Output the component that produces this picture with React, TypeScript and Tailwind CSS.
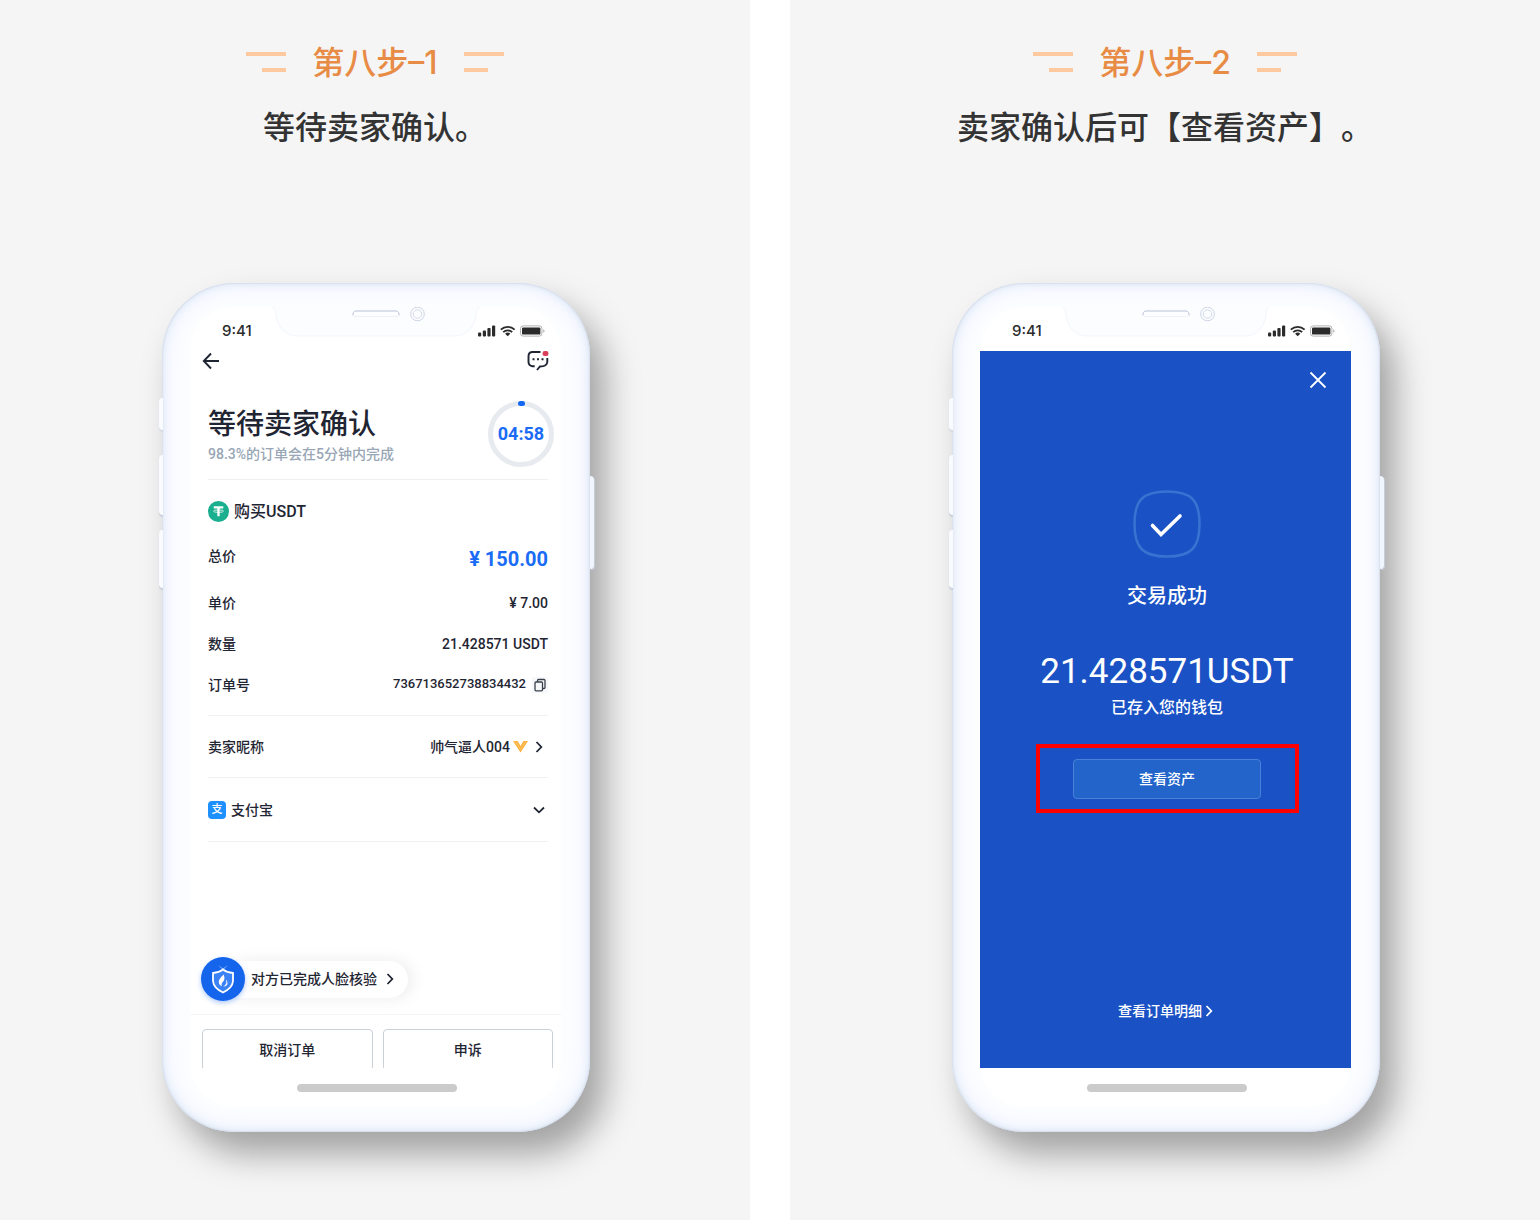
import type { ReactNode } from "react";

function StepHeading({ title, caption }: { title: string; caption: string }) {
  return (
    <header className="flex flex-col items-center">
      <div className="flex items-center justify-center gap-6">
        <span aria-hidden="true" className="flex flex-col items-end gap-3">
          <span className="h-1 w-10 bg-[#ffc9a0]" />
          <span className="h-1 w-6 bg-[#ffc9a0]" />
        </span>
        <h2 className="px-0.5 pt-0.5 font-[Inter,'Noto_Sans_CJK_SC',sans-serif] text-[32px] leading-[46px] font-medium text-[#e88b45]">
          {title}
        </h2>
        <span aria-hidden="true" className="flex flex-col items-start gap-3">
          <span className="h-1 w-10 bg-[#ffc9a0]" />
          <span className="h-1 w-6 bg-[#ffc9a0]" />
        </span>
      </div>
      <p className="mt-[18px] text-[32px] leading-[48px] font-medium whitespace-nowrap text-[#333333] [text-spacing-trim:space-all]">
        {caption}
      </p>
    </header>
  );
}

function StatusBar() {
  return (
    <div className="relative flex h-11 items-center justify-between pt-1 pr-4 pl-8">
      <Notch />
      <span className="font-[Inter,sans-serif] text-[15px] leading-5 font-medium text-[#2b2b2b]">9:41</span>
      <svg viewBox="0 0 67 14" className="h-3.5 w-[67px]" aria-hidden="true">
        <g fill="#2b2b2b">
          <rect x="0" y="8.5" width="3.2" height="4" rx="1" />
          <rect x="4.8" y="6.5" width="3.2" height="6" rx="1" />
          <rect x="9.4" y="4" width="3.2" height="8.5" rx="1" />
          <rect x="14" y="1.5" width="3.2" height="11" rx="1" />
          <path d="M29.7 12.2l-2.6-2.5a3.9 3.9 0 0 1 5.2 0z" />
        </g>
        <g fill="none" stroke="#2b2b2b" strokeWidth="1.8">
          <path d="M22.8 5.6a10 10 0 0 1 13.8 0" />
          <path d="M25.2 8.2a6.5 6.5 0 0 1 9 0" />
        </g>
        <rect x="42.5" y="1.9" width="21.4" height="10.2" rx="2.6" fill="none" stroke="#b3b3b3" />
        <rect x="44" y="3.4" width="18.4" height="7.2" rx="1.2" fill="#2b2b2b" />
        <path d="M65.2 5.2q1.4.6 1.4 1.8t-1.4 1.8z" fill="#b3b3b3" />
      </svg>
    </div>
  );
}

function Notch() {
  return (
    <svg
      viewBox="0 0 208 30"
      fill="none"
      className="absolute top-0 left-1/2 h-[30px] w-[208px] -translate-x-1/2"
      aria-hidden="true"
    >
      <path
        d="M0 0c3 1 4 3 4 7 1 13 9 22 22 22h156c13 0 21-9 22-22 0-4 1-6 4-7z"
        fill="#fcfdff"
      />
      <path d="M0 0c3 1 4 3 4 7 1 13 9 22 22 22h156c13 0 21-9 22-22 0-4 1-6 4-7" stroke="#f2f5fb" />
      <path d="M81 8.500a3.500 3.500 0 0 1 3-4.500h40a3.500 3.500 0 0 1 3 4.500" stroke="#b9c3d6" />
      <path d="M82 9.500h44" stroke="#eef2f9" />
      <circle cx="145.500" cy="7" r="6.800" stroke="#ccd5e4" />
      <circle cx="145.500" cy="7" r="4.200" stroke="#d3dbe8" />
    </svg>
  );
}

function Phone({ children }: { children: ReactNode }) {
  return (
    <div className="relative mx-auto w-full max-w-[428px]">
      <span aria-hidden="true" className="absolute top-[115px] -left-[3px] h-8 w-1 rounded-l-sm bg-[#f9fbff] shadow-[0_2px_1px_#d5dae4]" />
      <span aria-hidden="true" className="absolute top-[172px] -left-[3px] h-[60px] w-1 rounded-l-sm bg-[#f9fbff] shadow-[0_2px_1px_#c9cfdb]" />
      <span aria-hidden="true" className="absolute top-[247px] -left-[3px] h-[58px] w-1 rounded-l-sm bg-[#f9fbff] shadow-[0_2px_1px_#c9cfdb]" />
      <div className="rounded-[72px] bg-[#fcfdff] pt-6 pr-[29px] pb-[25px] pl-7 shadow-[inset_0_0_2px_#bcc7d8,inset_0_0_8px_#d9e2f2,inset_0_0_26px_#e6eefc,15px_22px_34px_rgba(0,0,0,0.34)]">
        <div className="rounded-[44px] bg-white">
          <StatusBar />
          {children}
          <div className="flex h-[39px] items-center justify-center">
            <span className="ml-0.5 h-2 w-40 rounded-full bg-[#cbcbcb]" />
          </div>
        </div>
      </div>
      <span aria-hidden="true" className="absolute top-[193px] -right-1 h-[93px] w-1 rounded-r-sm bg-[#f1f5fe] shadow-[1px_1px_1px_#c9cfdb]" />
    </div>
  );
}

function Chevron({ className, down = false }: { className: string; down?: boolean }) {
  return (
    <svg viewBox="0 0 14 14" fill="none" stroke="currentColor" strokeWidth="1.8" className={className} aria-hidden="true">
      <path d={down ? "M2 4.500l5 4.800 5-4.800" : "M4.500 2l4.800 5-4.800 5"} />
    </svg>
  );
}

function Row({ label, children }: { label: string; children: ReactNode }) {
  return (
    <div className="flex h-[41px] items-center justify-between">
      <dt>{label}</dt>
      <dd className="flex items-center">{children}</dd>
    </div>
  );
}

function WaitingScreen() {
  return (
    <div className="text-sm font-medium text-[#1f2533]">
      <div className="flex h-5 items-center justify-between px-3">
        <button type="button" aria-label="返回">
          <svg viewBox="0 0 18 18" fill="none" stroke="#1f2533" strokeWidth="1.9" className="size-[18px]">
            <path d="M17 9H2M9 1.500L1.800 9 9 16.500" />
          </svg>
        </button>
        <button type="button" aria-label="消息">
          <svg viewBox="0 0 22 22" fill="none" className="size-[22px]">
            <path
              d="M13.500 2H5.500Q1.700 2 1.500 6v6q.1 3.700 4 4.200h2.200M10 20l3-3.500q7 0 7.300-4.500V8"
              stroke="#1f2533"
              strokeWidth="1.900"
            />
            <path d="M5.500 9.200h2M10 9.200h2M14.500 9.200h2" stroke="#1f2533" strokeWidth="2" />
            <rect x="15.500" y="1" width="6" height="5" rx="2.300" fill="#d93f57" />
          </svg>
        </button>
      </div>

      <div className="mr-[13px] ml-[18px]">
        <section className="flex h-[109px] items-end justify-between border-b border-[#eef1f3] pb-3">
          <div className="pb-0.5">
            <h3 className="text-[28px] leading-9">等待卖家确认</h3>
            <p className="leading-[22px] text-[#98a6b5]">98.3%的订单会在5分钟内完成</p>
          </div>
          <div className="relative -mr-1.5 flex size-[66px] items-center justify-center">
            <svg viewBox="0 0 66 66" fill="none" className="absolute inset-0" aria-hidden="true">
              <circle cx="33" cy="33" r="30.500" stroke="#e7eaef" strokeWidth="5" />
              <rect x="30" y="0" width="7" height="5" rx="2.500" fill="#1467f2" />
            </svg>
            <span className="relative text-lg leading-6 font-bold text-[#1a6cf5]">04:58</span>
          </div>
        </section>

        <section className="border-b border-[#eef1f3] pb-2.5">
          <h4 className="flex h-[62px] items-center gap-[5px] text-base">
            <svg viewBox="0 0 22 22" className="size-[21px]" aria-hidden="true">
              <circle cx="11" cy="11" r="11" fill="#1aaf8e" />
              <path d="M6 5.500h10v2.300h-3.800v8.200H9.800V7.800H6z" fill="#fff" />
              <ellipse cx="11" cy="10.600" rx="5.200" ry="1.300" fill="none" stroke="#fff" strokeWidth=".8" />
            </svg>
            <span className="pt-0.5">购买USDT</span>
          </h4>
          <dl>
            <div className="mb-2 flex h-8 items-center justify-between">
              <dt className="pb-1">总价</dt>
              <dd className="pt-0.5 text-xl font-bold text-[#1a6cf5]">¥ 150.00</dd>
            </div>
            <Row label="单价">¥ 7.00</Row>
            <Row label="数量">21.428571 USDT</Row>
            <Row label="订单号">
              <span className="text-[13px]">736713652738834432</span>
              <button type="button" aria-label="复制订单号" className="ml-1.5 bg-[#f7f8fa] p-px">
                <svg viewBox="0 0 14 14" fill="none" stroke="#3a404c" strokeWidth="1.300" className="size-3.5">
                  <rect x="2" y="4" width="7.500" height="8.800" rx="1" />
                  <path d="M4.500 3.800V2.500q0-1 1-1H11q1 0 1 1V9.500q0 1-1 1H9.800" />
                </svg>
              </button>
            </Row>
          </dl>
        </section>

        <button
          type="button"
          className="flex h-[62px] w-full items-center justify-between border-b border-[#eef1f3] pr-0.5"
        >
          <span>卖家昵称</span>
          <span className="flex items-center">
            帅气逼人004
            <svg viewBox="0 0 15 13" className="ml-[3px] h-[13px] w-[15px]" aria-hidden="true">
              <path d="M0 1h4.600l2.900 5 2.900-5H15L7.500 12.500z" fill="#fbb03b" />
              <path d="M2.300 1.500l5.200 8 5.200-8" stroke="#ffd58c" strokeWidth=".6" fill="none" />
            </svg>
            <Chevron className="ml-1 size-3.5" />
          </span>
        </button>

        <button
          type="button"
          className="flex h-16 w-full items-center justify-between border-b border-[#eef1f3] pr-0.5"
        >
          <span className="flex items-center gap-[5px]">
            <span className="flex size-[18px] items-center justify-center rounded bg-[#1e90ff] text-[11px] leading-none text-white">
              支
            </span>
            支付宝
          </span>
          <Chevron down className="size-3.5" />
        </button>
      </div>

      <button type="button" className="mt-[115px] ml-[11px] flex items-center">
        <span className="relative z-10 flex size-11 items-center justify-center rounded-full bg-[#1564ec] shadow-[0_2px_5px_rgba(21,100,236,0.35)]">
          <svg viewBox="0 0 26 30" fill="none" className="h-[30px] w-[26px]" aria-hidden="true">
            <path d="M8 1l5 3.500L18 1l-5 5z" fill="#8db9ff" />
            <path
              d="M13 5.500q4 3.200 10 3.500v8q-.5 7-10 11.500Q3.500 24 3 17V9q6-.3 10-3.500z"
              fill="#3b82f5"
              stroke="#fff"
              strokeWidth="1.800"
            />
            <path d="M13.800 10.500q-5.300 4.500-5 7.500 0 3 3 4-1-2.500 2.200-5.500 1-2.500-.2-6z" fill="#fff" />
            <path d="M15.800 15.500q2 4.500-2.600 7 4.500-.3 4.300-3.800 0-1.800-1.700-3.200z" fill="#fff" />
          </svg>
        </span>
        <span className="-ml-3 flex h-[37px] items-center gap-1.5 rounded-r-full bg-white pr-[11px] pl-[18px] shadow-[4px_0_16px_rgba(0,0,0,0.08)]">
          对方已完成人脸核验
          <Chevron className="size-3.5" />
        </span>
      </button>

      <footer className="mt-[13px] grid h-[54px] grid-cols-2 gap-2.5 overflow-hidden border-t border-[#f3f5f7] pt-3.5 pr-2 pl-3">
        <button type="button" className="h-[42px] rounded border border-[#c9d0d8]">
          取消订单
        </button>
        <button type="button" className="h-[42px] rounded border border-[#c9d0d8]">
          申诉
        </button>
      </footer>
    </div>
  );
}

function SuccessScreen() {
  return (
    <div className="flex flex-col items-center bg-[#1a52c5] pl-[3px] text-white">
      <button type="button" aria-label="关闭" className="mt-5 mr-6 self-end">
        <svg viewBox="0 0 18 18" fill="none" stroke="#fff" strokeWidth="1.800" className="size-[18px]">
          <path d="M1.500 1.500l15 15M16.500 1.500l-15 15" />
        </svg>
      </button>
      <svg viewBox="0 0 68 68" fill="none" className="mt-[101px] size-[68px]" aria-hidden="true">
        <path
          d="M34 1.500C58 1.500 66.500 10 66.500 34S58 66.500 34 66.500 1.500 58 1.500 34 10 1.500 34 1.500z"
          stroke="#3a72d2"
          strokeWidth="2.500"
        />
        <path d="M19.500 35.500L28 44.500 47 26" stroke="#fff" strokeWidth="3.600" strokeLinecap="round" />
      </svg>
      <h3 className="mt-[22px] text-xl leading-8 font-medium">交易成功</h3>
      <p className="mt-9 text-[35px] leading-[48px]">21.428571USDT</p>
      <p className="text-base leading-6 font-medium">已存入您的钱包</p>
      <div className="mt-6 flex h-[69px] w-[263px] items-center justify-center border-4 border-[#fe0000]">
        <button
          type="button"
          className="h-10 w-[188px] rounded border border-[#4a80d6] bg-[#2264ca] text-sm font-medium"
        >
          查看资产
        </button>
      </div>
      <a href="#order" className="mt-[187px] mb-[46px] flex items-center text-sm leading-[22px] font-medium">
        查看订单明细
        <Chevron className="size-3.5" />
      </a>
    </div>
  );
}

function Step({ title, caption, children }: { title: string; caption: string; children: ReactNode }) {
  return (
    <section className="bg-[#f5f5f5] px-10 pt-[38px] pb-[88px]">
      <StepHeading title={title} caption={caption} />
      <div className="mt-[131px] pl-0.5">
        <Phone>{children}</Phone>
      </div>
    </section>
  );
}

export default function App() {
  return (
    <main className="grid min-h-screen grid-cols-2 gap-10 bg-white font-[Roboto,'Noto_Sans_CJK_SC',sans-serif]">
      <Step title="第八步–1" caption="等待卖家确认。">
        <WaitingScreen />
      </Step>
      <Step title="第八步–2" caption="卖家确认后可【查看资产】。">
        <SuccessScreen />
      </Step>
    </main>
  );
}
